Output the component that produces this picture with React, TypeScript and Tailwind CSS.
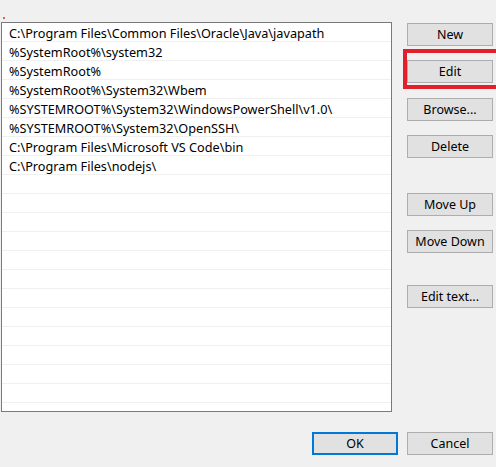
import React from 'react';

// Environment variable path entries
const PATHS = [
  'C:\\Program Files\\Common Files\\Oracle\\Java\\javapath',
  '%SystemRoot%\\system32',
  '%SystemRoot%',
  '%SystemRoot%\\System32\\Wbem',
  '%SYSTEMROOT%\\System32\\WindowsPowerShell\\v1.0\\',
  '%SYSTEMROOT%\\System32\\OpenSSH\\',
  'C:\\Program Files\\Microsoft VS Code\\bin',
  'C:\\Program Files\\nodejs\\',
];

const ROW_COUNT = 21;

function Btn({ label, className = '' }: { label: string; className?: string }) {
  return (
    <button
      className={`flex h-[23px] w-[86px] items-center justify-center border border-[#adadad] bg-[#e1e1e1] pt-[1px] text-[12.5px] text-black ${className}`}
    >
      {label}
    </button>
  );
}

export default function App() {
  const rows = Array.from({ length: ROW_COUNT }, (_, i) => PATHS[i] ?? '');

  return (
    <div
      className="relative h-[467px] w-[496px] overflow-hidden bg-[#f0f0f0]"
      style={{ fontFamily: '"Noto Sans", "Open Sans", sans-serif' }}
    >
      {/* stray red pixel at top left */}
      <span className="absolute left-[3px] top-[17px] h-[2px] w-[2px] bg-[#e06070]" />

      <div className="flex pt-[22px]">
        {/* List box */}
        <div className="ml-[1px] h-[390px] w-[391px] overflow-hidden border border-[#7a7a7a] bg-white">
          {rows.map((p, i) => (
            <div
              key={i}
              className="flex h-[19px] items-center border-b border-[#f0f0f0] px-[7px] pt-[2px] text-[12.7px] leading-none whitespace-nowrap text-black"
            >
              {p}
            </div>
          ))}
        </div>

        {/* Button column */}
        <div className="ml-[15px] flex flex-col pt-[1px]">
          <Btn label="New" />
          <Btn label="Edit" className="mt-[14px]" />
          <Btn label="Browse..." className="mt-[15px]" />
          <Btn label="Delete" className="mt-[14px]" />
          <Btn label="Move Up" className="mt-[35px]" />
          <Btn label="Move Down" className="mt-[14px]" />
          <Btn label="Edit text..." className="mt-[32px]" />
        </div>
      </div>

      {/* Dialog actions */}
      <div className="mt-[20px] flex justify-end gap-[9px] pr-[3px]">
        <button className="flex h-[23px] w-[86px] items-center justify-center border-2 border-[#0078d7] bg-[#e1e1e1] pt-[1px] text-[12.5px] text-black">
          OK
        </button>
        <Btn label="Cancel" />
      </div>

      {/* red highlight annotation, runs off the right edge */}
      <div className="pointer-events-none absolute left-[403px] top-[49px] h-[40px] w-[130px] border-[4.5px] border-[#e2202c]" />
    </div>
  );
}
